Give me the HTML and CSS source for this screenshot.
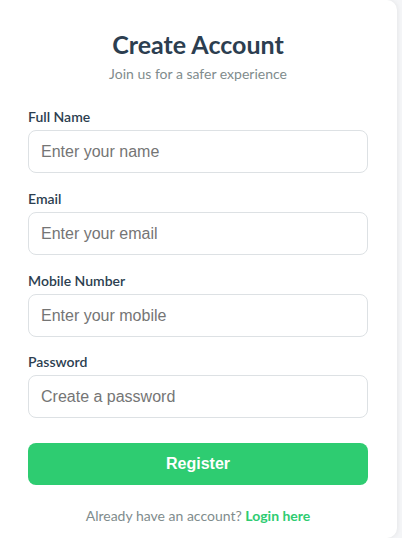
FILE: index.html
```html
<!DOCTYPE html>
<html lang="en">
<head>
    <meta charset="UTF-8">
    <meta name="viewport" content="width=device-width, initial-scale=1.0">
    <title>Create Account</title>
    <link rel="stylesheet" href="styles.css">
</head>
<body>
    <div class="card">
        <h1>Create Account</h1>
        <p class="subtitle">Join us for a safer experience</p>
        <form class="register-form" onsubmit="return false;">
            <div class="field">
                <label for="name">Full Name</label>
                <input type="text" id="name" placeholder="Enter your name">
            </div>
            <div class="field">
                <label for="email">Email</label>
                <input type="email" id="email" placeholder="Enter your email">
            </div>
            <div class="field">
                <label for="mobile">Mobile Number</label>
                <input type="tel" id="mobile" placeholder="Enter your mobile">
            </div>
            <div class="field">
                <label for="password">Password</label>
                <input type="password" id="password" placeholder="Create a password">
            </div>
            <button type="submit" class="register-btn">Register</button>
        </form>
        <p class="login-link">Already have an account? <a href="login.html">Login here</a></p>
    </div>
</body>
</html>
```

FILE: styles.css
```css
body {
    font-family: Lato, "Open Sans", sans-serif;
    background-color: #f4f5f7;
    margin: 0;
    padding: 0;
}

.card {
    background-color: #fff;
    width: 397px;
    height: 538px;
    padding: 30px 29px 0 28px;
    box-sizing: border-box;
    border-radius: 0 10px 10px 0;
    box-shadow: 1px 0 4px rgba(0, 0, 0, 0.06);
}

h1 {
    margin: 0;
    font-size: 25px;
    line-height: 28px;
    font-weight: 700;
    color: #2c3e50;
    text-align: center;
}

.subtitle {
    margin: 6px 0 0;
    font-size: 14px;
    line-height: 20px;
    color: #7f8c8d;
    text-align: center;
}

.register-form {
    margin-top: 23px;
}

.field {
    margin-bottom: 16px;
}

.field:nth-child(3) {
    margin-bottom: 15px;
}

.field label {
    display: block;
    font-size: 14px;
    line-height: 20px;
    font-weight: 600;
    color: #2c3e50;
    margin-bottom: 3px;
}

.field input {
    display: block;
    width: 100%;
    height: 43px;
    box-sizing: border-box;
    padding: 0 12px;
    border: 1px solid #dde1e4;
    border-radius: 8px;
    font-family: "Liberation Sans", Arial, sans-serif;
    font-size: 16px;
    color: #333;
    outline: none;
}

.field input::placeholder {
    color: #757575;
}

.register-btn {
    display: block;
    width: 100%;
    height: 42px;
    margin-top: 25px;
    background-color: #2ecc71;
    color: #fff;
    border: none;
    border-radius: 8px;
    font-family: "Liberation Sans", Arial, sans-serif;
    font-size: 16px;
    font-weight: 700;
    cursor: pointer;
}

.login-link {
    margin: 21px 0 0;
    font-size: 14px;
    line-height: 20px;
    color: #7f8c8d;
    text-align: center;
}

.login-link a {
    color: #2ecc71;
    font-weight: 700;
    text-decoration: none;
}
```
